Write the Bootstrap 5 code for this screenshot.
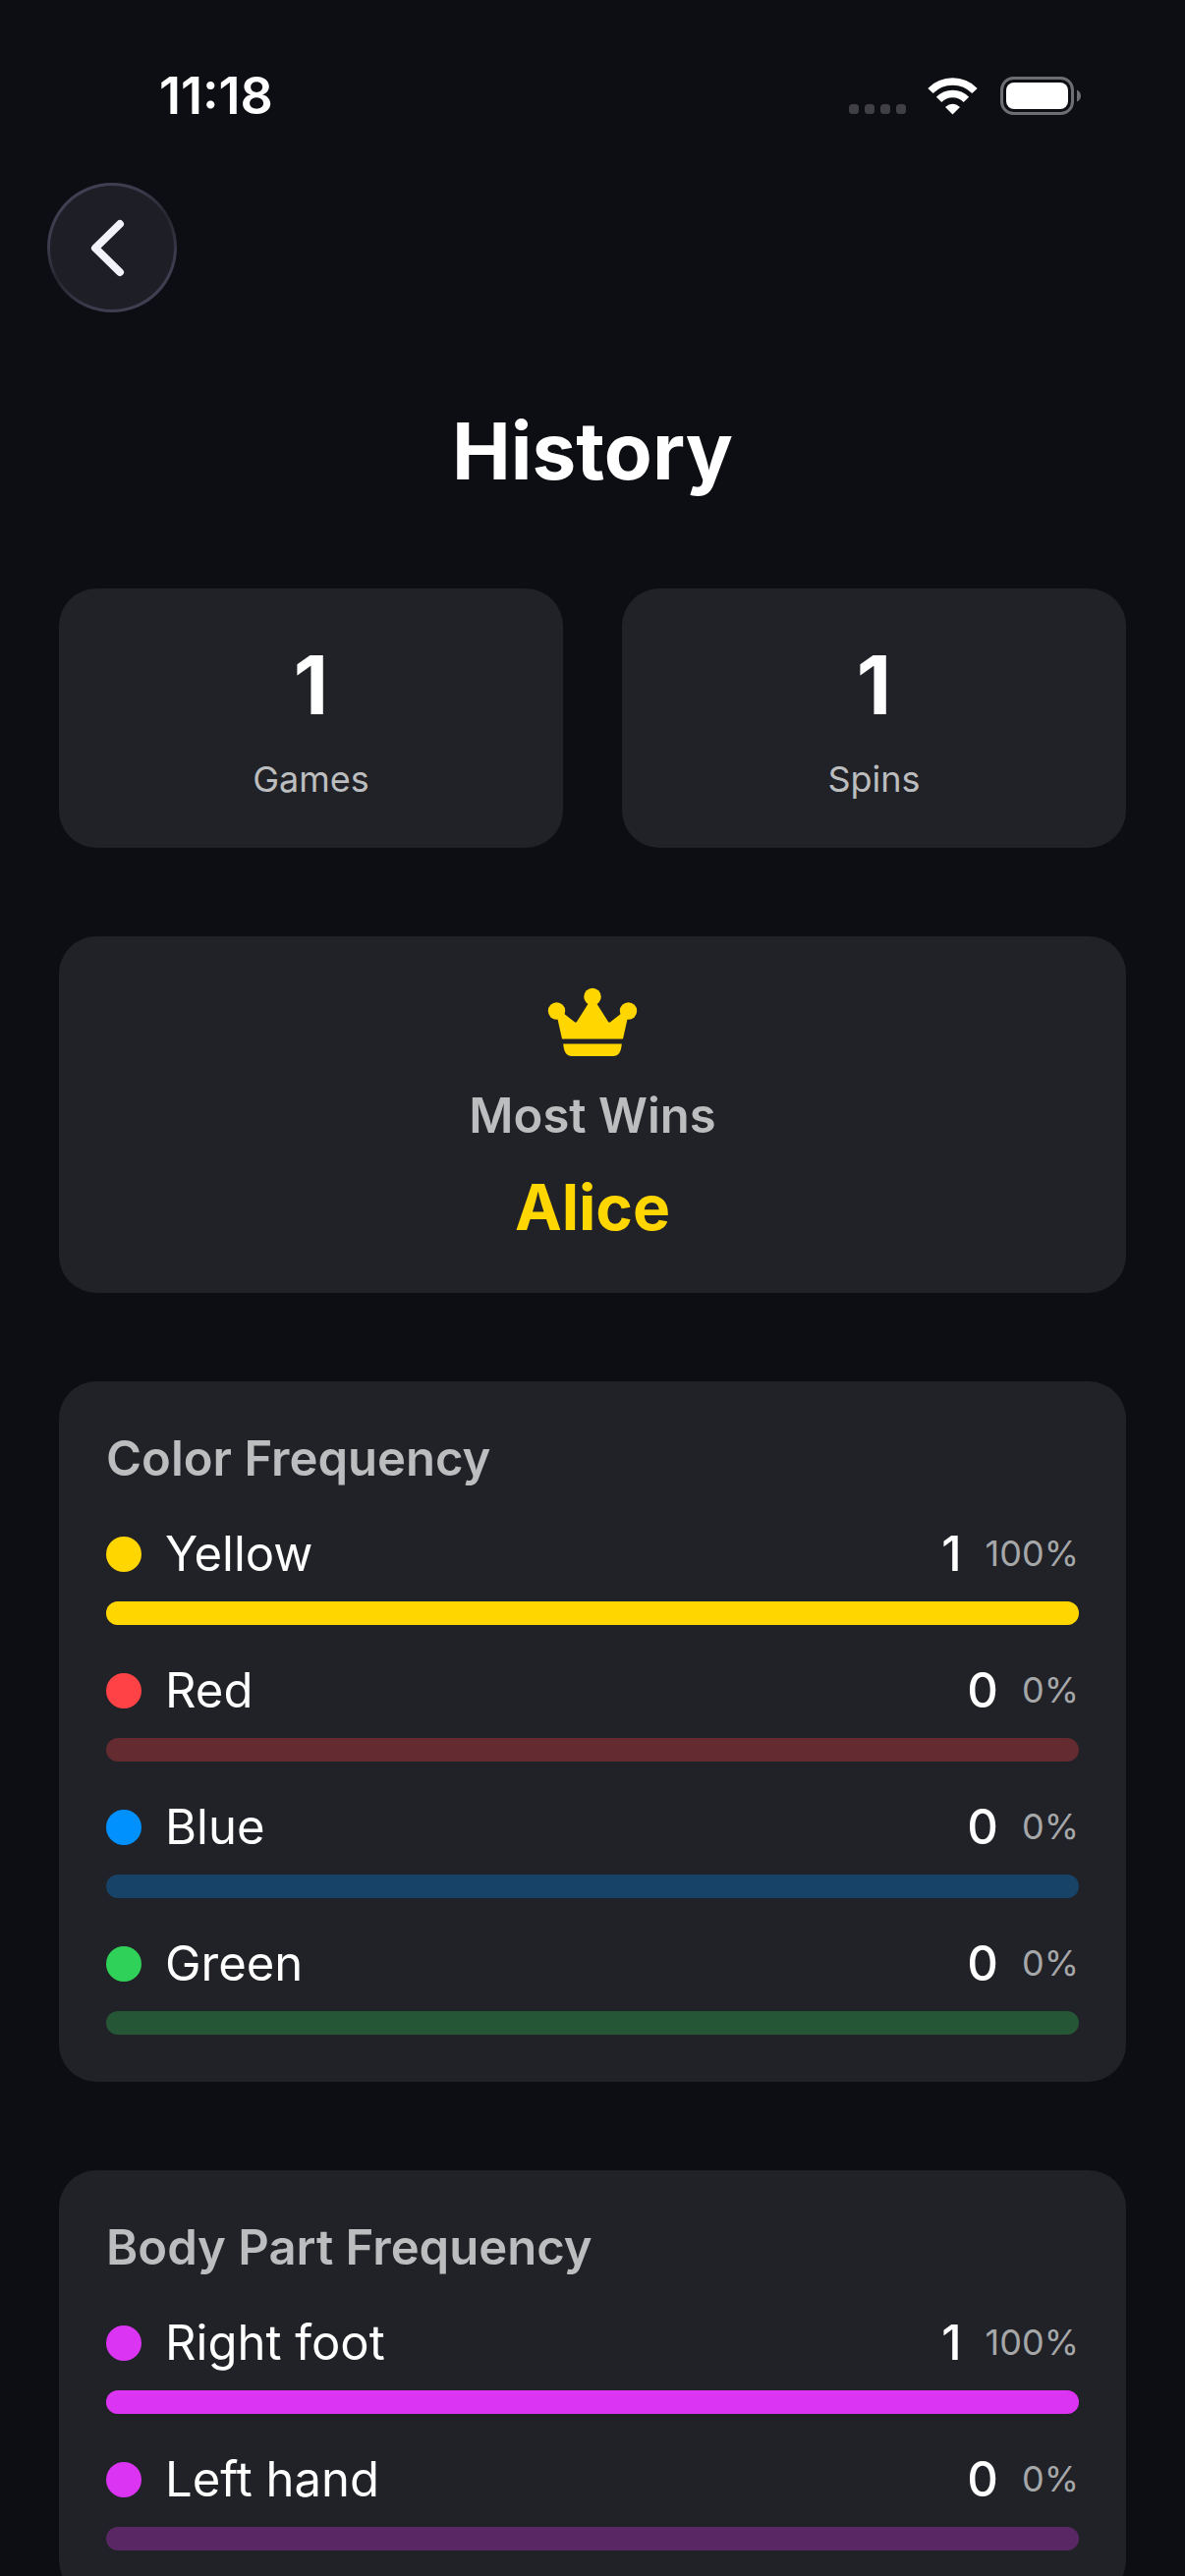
<!DOCTYPE html>
<html lang="en" data-bs-theme="dark">
<head>
<meta charset="utf-8">
<meta name="viewport" content="width=device-width, initial-scale=1">
<title>History</title>
<link href="https://cdn.jsdelivr.net/npm/bootstrap@5.3.0/dist/css/bootstrap.min.css" rel="stylesheet">
<style>
  :root { --ink-soft: #bcbdbf; --gold: #ffd600; --panel: #212227; }
  body { font-family: Inter, "Liberation Sans", sans-serif; background: #0d0e13; color: #fff; }
  .status-bar { padding: 68px 106px 0 162px; height: 126px; }
  .clock { font-size: 52px; line-height: 60px; font-weight: 600; }
  .status-icons { gap: 22px; height: 60px; }
  .screen-body { min-height: 0; overflow-y: auto; scrollbar-width: none; padding: 60px 60px 0; }
  .screen-body::-webkit-scrollbar { display: none; }
  .back-btn {
    width: 132px; height: 132px; margin-left: -12px; border: 3px solid transparent;
    background: linear-gradient(#1e1e26, #1e1e26) padding-box,
                linear-gradient(150deg, #444256 5%, #3c3a4c 30%, #262630 50%, #3c3a4c 72%, #444256 95%) border-box;
  }
  .screen-title { font-size: 80px; line-height: 102px; font-weight: 700; margin: 90px 0 89px; }
  .stack { gap: 90px; }
  .stat-row { --bs-gutter-x: 60px; }
  .panel { background: var(--panel); border: 0; border-radius: 38px; padding: 48px; }
  .stat-value { font-size: 82px; line-height: 102px; font-weight: 700; margin-bottom: 22px; }
  .caption-text { font-size: 36px; line-height: 44px; color: var(--ink-soft); }
  .panel-title { font-size: 49px; line-height: 61px; font-weight: 600; color: var(--ink-soft); }
  .winner { font-size: 64px; line-height: 78px; font-weight: 700; color: var(--gold); }
  .rows { gap: 36px; }
  .freq-head { font-size: 49px; line-height: 61px; margin-bottom: 18px; gap: 24px; }
  .dot { width: 36px; height: 36px; background: var(--tone); }
  .count { font-weight: 500; }
  .pct { font-size: 36px; color: #a6a7a9; }
  .meter { --bs-progress-height: 24px; --bs-progress-border-radius: 12px; --bs-progress-bg: var(--tone-dim); --bs-progress-bar-bg: var(--tone); }
  .tone-yellow { --tone: #ffd600; --tone-dim: #64581c; }
  .tone-red { --tone: #ff4245; --tone-dim: #642b30; }
  .tone-blue { --tone: #0091ff; --tone-dim: #174368; }
  .tone-green { --tone: #30d158; --tone-dim: #255636; }
  .tone-pink { --tone: #db34f2; --tone-dim: #592763; }
</style>
</head>
<body class="vh-100 d-flex flex-column overflow-hidden">
<header class="status-bar d-flex justify-content-between align-items-start flex-shrink-0">
  <span class="clock">11:18</span>
  <div class="status-icons d-flex align-items-center">
    <svg width="58" height="40" viewBox="0 0 58 40" fill="#3f3f44" aria-hidden="true">
      <rect x="0" y="28" width="10" height="10" rx="3.5"/><rect x="16" y="28" width="10" height="10" rx="3.5"/><rect x="32" y="28" width="10" height="10" rx="3.5"/><rect x="48" y="28" width="10" height="10" rx="3.5"/>
    </svg>
    <svg width="51" height="40" viewBox="0 0 51 40" aria-hidden="true">
      <g fill="none" stroke="#fff" stroke-width="7.5"><path d="M3 14.500A31.500 31.500 0 0 1 48 14.500"/><path d="M11.600 23.400A19.200 19.200 0 0 1 39.400 23.400"/></g>
      <path d="M18 31Q25.500 24.500 33 31L25.500 38.500Z" fill="#fff"/>
    </svg>
    <svg width="83" height="40" viewBox="0 0 83 40" aria-hidden="true">
      <rect x="2.500" y="1.500" width="72" height="36" rx="12" fill="none" stroke="#6d6e71" stroke-width="3"/>
      <rect x="7" y="6" width="63" height="27" rx="8" fill="#fff"/>
      <path d="M79 13.500Q83 15.500 83 19.500T79 25.500Z" fill="#6d6e71"/>
    </svg>
  </div>
</header>
<main class="screen-body flex-grow-1">
  <button type="button" class="back-btn btn rounded-circle p-0 d-flex align-items-center justify-content-center" aria-label="Back">
    <svg width="48" height="64" viewBox="0 0 48 64" fill="none" stroke="#f2f2fb" stroke-width="8" stroke-linecap="round" stroke-linejoin="round" aria-hidden="true"><path d="M32 8L7 32.500L32 57"/></svg>
  </button>
  <h1 class="screen-title text-center">History</h1>
  <div class="stack d-flex flex-column">
    <section class="row stat-row">
      <div class="col-6"><div class="panel card text-center"><div class="stat-value">1</div><div class="caption-text">Games</div></div></div>
      <div class="col-6"><div class="panel card text-center"><div class="stat-value">1</div><div class="caption-text">Spins</div></div></div>
    </section>
    <section class="panel card align-items-center">
      <svg class="mb-4" width="92" height="80" viewBox="0 0 92 80" fill="#ffd600" aria-hidden="true">
        <circle cx="46" cy="13.500" r="8.700"/><circle cx="9.500" cy="28" r="8.700"/><circle cx="82.500" cy="28" r="8.700"/>
        <path d="M10 34L15 56.500H77L82 34L83 28L76 30L64.500 39Q63 40.500 62 39L50 20H42L30 39Q29 40.500 27.500 39L16 30Z"/>
        <path d="M16.200 61.500H75.800Q75 74 67 74H25Q17 74 16.200 61.500Z"/>
      </svg>
      <h2 class="panel-title mb-4">Most Wins</h2>
      <div class="winner">Alice</div>
    </section>
    <section class="panel card rows">
      <h2 class="panel-title mb-0">Color Frequency</h2>
      <div class="tone-yellow">
        <div class="freq-head d-flex align-items-center"><span class="dot rounded-circle"></span><span class="me-auto">Yellow</span><span class="count">1</span><span class="pct">100%</span></div>
        <div class="meter progress" role="progressbar" aria-label="Yellow" aria-valuenow="100" aria-valuemin="0" aria-valuemax="100"><div class="progress-bar" style="width: 100%"></div></div>
      </div>
      <div class="tone-red">
        <div class="freq-head d-flex align-items-center"><span class="dot rounded-circle"></span><span class="me-auto">Red</span><span class="count">0</span><span class="pct">0%</span></div>
        <div class="meter progress" role="progressbar" aria-label="Red" aria-valuenow="0" aria-valuemin="0" aria-valuemax="100"><div class="progress-bar" style="width: 0%"></div></div>
      </div>
      <div class="tone-blue">
        <div class="freq-head d-flex align-items-center"><span class="dot rounded-circle"></span><span class="me-auto">Blue</span><span class="count">0</span><span class="pct">0%</span></div>
        <div class="meter progress" role="progressbar" aria-label="Blue" aria-valuenow="0" aria-valuemin="0" aria-valuemax="100"><div class="progress-bar" style="width: 0%"></div></div>
      </div>
      <div class="tone-green">
        <div class="freq-head d-flex align-items-center"><span class="dot rounded-circle"></span><span class="me-auto">Green</span><span class="count">0</span><span class="pct">0%</span></div>
        <div class="meter progress" role="progressbar" aria-label="Green" aria-valuenow="0" aria-valuemin="0" aria-valuemax="100"><div class="progress-bar" style="width: 0%"></div></div>
      </div>
    </section>
    <section class="panel card rows">
      <h2 class="panel-title mb-0">Body Part Frequency</h2>
      <div class="tone-pink">
        <div class="freq-head d-flex align-items-center"><span class="dot rounded-circle"></span><span class="me-auto">Right foot</span><span class="count">1</span><span class="pct">100%</span></div>
        <div class="meter progress" role="progressbar" aria-label="Right foot" aria-valuenow="100" aria-valuemin="0" aria-valuemax="100"><div class="progress-bar" style="width: 100%"></div></div>
      </div>
      <div class="tone-pink">
        <div class="freq-head d-flex align-items-center"><span class="dot rounded-circle"></span><span class="me-auto">Left hand</span><span class="count">0</span><span class="pct">0%</span></div>
        <div class="meter progress" role="progressbar" aria-label="Left hand" aria-valuenow="0" aria-valuemin="0" aria-valuemax="100"><div class="progress-bar" style="width: 0%"></div></div>
      </div>
    </section>
  </div>
</main>
<script src="https://cdn.jsdelivr.net/npm/bootstrap@5.3.0/dist/js/bootstrap.bundle.min.js"></script>
</body>
</html>
